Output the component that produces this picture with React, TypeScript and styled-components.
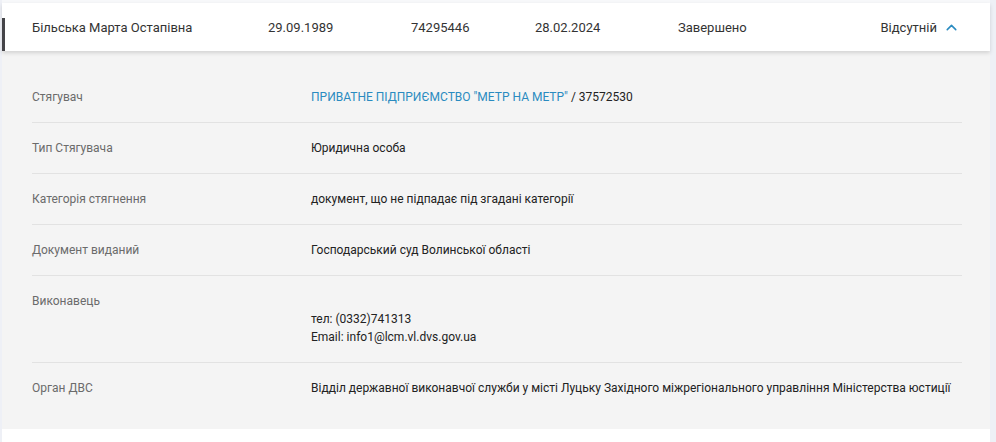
import React from "react";
import styled, { createGlobalStyle } from "styled-components";
import { ChevronUp } from "lucide-react";

const GlobalStyle = createGlobalStyle`
  html, body {
    margin: 0;
    padding: 0;
    background: #ffffff;
    font-family: Roboto, "Liberation Sans", Arial, sans-serif;
  }
`;

const Page = styled.div`
  display: flex;
  width: 996px;
  height: 442px;
  background: #ffffff;
`;

const EdgeStrip = styled.div<{ $w: number }>`
  width: ${(p) => p.$w}px;
  flex-shrink: 0;
  background: #eef0f6;
`;

const Card = styled.div`
  flex: 1;
  display: flex;
  flex-direction: column;
  padding-top: 3px;
  background: #f7f8fa;
`;

const Header = styled.div`
  position: relative;
  display: flex;
  align-items: center;
  height: 48px;
  padding-left: 30px;
  background: #ffffff;
  box-shadow: 0 2px 4px rgba(0, 0, 0, 0.14);
  font-size: 13px;
  color: #333333;
  z-index: 1;

  &::before {
    content: "";
    position: absolute;
    left: 0;
    top: 15px;
    bottom: 0;
    width: 3px;
    background: #444448;
  }
`;

const Cell = styled.div<{ $w: number }>`
  width: ${(p) => p.$w}px;
  flex-shrink: 0;
  white-space: nowrap;
`;

const Toggle = styled.div`
  margin-left: auto;
  margin-right: 30px;
  display: flex;
  align-items: center;
  gap: 6px;
  color: #333333;
  svg {
    color: #2a8bc0;
  }
`;

const Details = styled.div`
  background: #f4f4f4;
  padding: 21px 28px 16px 30px;
`;

const Row = styled.div<{ $last?: boolean }>`
  display: flex;
  padding: 16px 0;
  border-bottom: ${(p) => (p.$last ? "none" : "1px solid #e2e2e2")};
  font-size: 12px;
  line-height: 18px;
`;

const Label = styled.div`
  width: 279px;
  flex-shrink: 0;
  color: #6b6b6b;
`;

const Value = styled.div`
  color: #222222;
  white-space: pre-line;
`;

const Link = styled.a`
  color: #2a8bc0;
  text-decoration: none;
`;

const Footer = styled.div`
  flex: 1;
  background: #ffffff;
`;

const rows: { label: string; value: React.ReactNode }[] = [
  {
    label: "Стягувач",
    value: (
      <>
        <Link href="#">ПРИВАТНЕ ПІДПРИЄМСТВО "МЕТР НА МЕТР"</Link> / 37572530
      </>
    ),
  },
  { label: "Тип Стягувача", value: "Юридична особа" },
  { label: "Категорія стягнення", value: "документ, що не підпадає під згадані категорії" },
  { label: "Документ виданий", value: "Господарський суд Волинської області" },
  {
    label: "Виконавець",
    value: "\u00a0\nтел: (0332)741313\nEmail: info1@lcm.vl.dvs.gov.ua",
  },
  {
    label: "Орган ДВС",
    value:
      "Відділ державної виконавчої служби у місті Луцьку Західного міжрегіонального управління Міністерства юстиції",
  },
];

const App = () => {
  return (
    <>
      <GlobalStyle />
      <Page>
        <EdgeStrip $w={2} />
        <Card>
          <Header>
            <Cell $w={236}>Більська Марта Остапівна</Cell>
            <Cell $w={143}>29.09.1989</Cell>
            <Cell $w={124}>74295446</Cell>
            <Cell $w={143}>28.02.2024</Cell>
            <Cell $w={120}>Завершено</Cell>
            <Toggle>
              Відсутній
              <ChevronUp size={17} strokeWidth={2.2} />
            </Toggle>
          </Header>
          <Details>
            {rows.map((r, i) => (
              <Row key={r.label} $last={i === rows.length - 1}>
                <Label>{r.label}</Label>
                <Value>{r.value}</Value>
              </Row>
            ))}
          </Details>
          <Footer />
        </Card>
        <EdgeStrip $w={6} />
      </Page>
    </>
  );
};

export default App;
